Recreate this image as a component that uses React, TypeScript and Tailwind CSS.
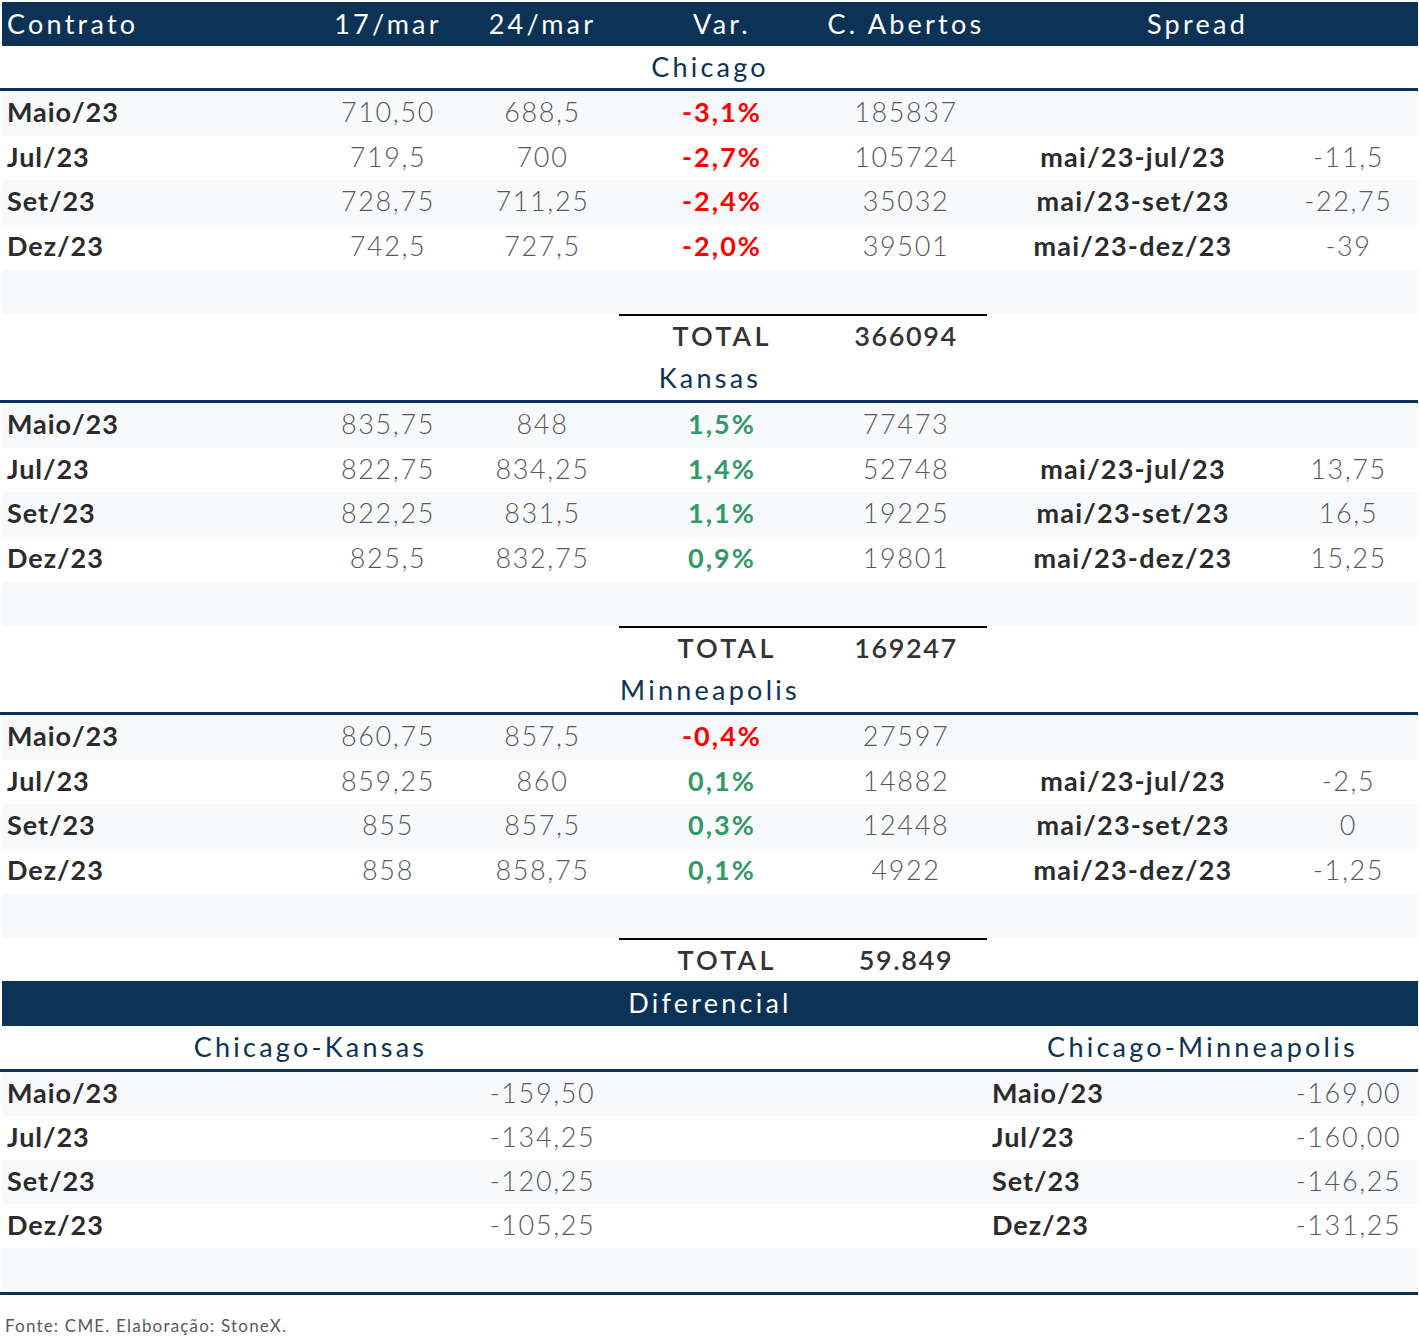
import React from "react";

type Sec = { title: string; rows: string[][]; total: string; totalShift: boolean };

const sections: Sec[] = [
  {
    title: "Chicago",
    rows: [
      ["Maio/23", "710,50", "688,5", "-3,1%", "185837", "", ""],
      ["Jul/23", "719,5", "700", "-2,7%", "105724", "mai/23-jul/23", "-11,5"],
      ["Set/23", "728,75", "711,25", "-2,4%", "35032", "mai/23-set/23", "-22,75"],
      ["Dez/23", "742,5", "727,5", "-2,0%", "39501", "mai/23-dez/23", "-39"],
    ],
    total: "366094",
    totalShift: false,
  },
  {
    title: "Kansas",
    rows: [
      ["Maio/23", "835,75", "848", "1,5%", "77473", "", ""],
      ["Jul/23", "822,75", "834,25", "1,4%", "52748", "mai/23-jul/23", "13,75"],
      ["Set/23", "822,25", "831,5", "1,1%", "19225", "mai/23-set/23", "16,5"],
      ["Dez/23", "825,5", "832,75", "0,9%", "19801", "mai/23-dez/23", "15,25"],
    ],
    total: "169247",
    totalShift: true,
  },
  {
    title: "Minneapolis",
    rows: [
      ["Maio/23", "860,75", "857,5", "-0,4%", "27597", "", ""],
      ["Jul/23", "859,25", "860", "0,1%", "14882", "mai/23-jul/23", "-2,5"],
      ["Set/23", "855", "857,5", "0,3%", "12448", "mai/23-set/23", "0"],
      ["Dez/23", "858", "858,75", "0,1%", "4922", "mai/23-dez/23", "-1,25"],
    ],
    total: "59.849",
    totalShift: true,
  },
];

const diff = [
  ["Maio/23", "-159,50", "-169,00"],
  ["Jul/23", "-134,25", "-160,00"],
  ["Set/23", "-120,25", "-146,25"],
  ["Dez/23", "-105,25", "-131,25"],
];

const GRID = "grid grid-cols-[308px_156px_153px_206px_162px_292px_139px] ml-[2px] w-[1416px]";
const LIGHT = "bg-[#f8f9fb]";
const REG = "tracking-[0.12em]";
const NUM = "text-center font-light tracking-[0.06em] text-[#595959]";
const LABEL = "font-bold tracking-[0.035em] text-[#2b2b2b]";
const SPREAD = "text-center font-bold tracking-[0.045em] text-[#2b2b2b]";

function NavyLine() {
  return <div className="h-[3px] w-[1418px] bg-[#0c3255]" />;
}

function Title({ text, h }: { text: string; h: string }) {
  return (
    <div className={`ml-[2px] flex ${h} w-[1416px] items-center justify-center pb-[2px] text-[#0c3255] ${REG}`}>
      {text}
    </div>
  );
}

function Section({ s, first }: { s: Sec; first: boolean }) {
  return (
    <>
      <Title text={s.title} h={first ? "h-[42px]" : "h-[43px]"} />
      <NavyLine />
      {s.rows.map((r, i) => {
        const neg = r[3].startsWith("-");
        return (
          <div key={i} className={`${GRID} h-[44.6px] items-center pb-[3px] ${i % 2 === 0 ? LIGHT : "bg-white"}`}>
            <div className={`pl-[5px] ${LABEL}`}>{r[0]}</div>
            <div className={NUM}>{r[1]}</div>
            <div className={NUM}>{r[2]}</div>
            <div className={`text-center font-bold tracking-[0.075em] ${neg ? "text-[#ff0000]" : "text-[#33996b]"}`}>{r[3]}</div>
            <div className={NUM}>{r[4]}</div>
            <div className={SPREAD}>{r[5]}</div>
            <div className={NUM}>{r[6]}</div>
          </div>
        );
      })}
      <div className={`${GRID} h-[44.6px] ${LIGHT}`} />
      <div className={`${GRID} h-[43px] bg-white`}>
        <div />
        <div />
        <div />
        <div className={`flex items-center justify-center border-t-2 border-black pb-[2px] font-semibold tracking-[0.12em] text-[#333333] ${s.totalShift ? "pl-[10px]" : ""}`}>
          TOTAL
        </div>
        <div className="flex items-center justify-center border-t-2 border-black pb-[2px] font-semibold tracking-[0.06em] text-[#333333]">
          {s.total}
        </div>
        <div />
        <div />
      </div>
    </>
  );
}

export default function App() {
  return (
    <div className="min-h-[1341px] w-[1419px] bg-white font-['Lato','Open_Sans',sans-serif] text-[27px] leading-none">
      <div className="pt-[2px]">
        <div className={`${GRID} h-[44px] items-center pb-[1px] bg-[#0c3255] text-white ${REG}`}>
          <div className="pl-[5px]">Contrato</div>
          <div className="text-center">17/mar</div>
          <div className="text-center">24/mar</div>
          <div className="text-center">Var.</div>
          <div className="text-center">C. Abertos</div>
          <div className="col-span-2 pr-[10px] text-center">Spread</div>
        </div>
        {sections.map((s, i) => (
          <Section key={s.title} s={s} first={i === 0} />
        ))}
        <div className={`ml-[2px] flex h-[45px] w-[1416px] items-center justify-center pb-[2px] bg-[#0c3255] text-white ${REG}`}>
          Diferencial
        </div>
        <div className={`${GRID} h-[43px] items-center pb-[2px] text-[#0c3255] ${REG}`}>
          <div className="col-span-3 text-center">Chicago-Kansas</div>
          <div />
          <div />
          <div className="col-span-2 text-center">Chicago-Minneapolis</div>
        </div>
        <NavyLine />
        {diff.map((r, i) => (
          <div key={i} className={`${GRID} h-[44px] items-center pb-[3px] ${i % 2 === 0 ? LIGHT : "bg-white"}`}>
            <div className={`pl-[5px] ${LABEL}`}>{r[0]}</div>
            <div />
            <div className={NUM}>{r[1]}</div>
            <div />
            <div />
            <div className={`pl-[5px] ${LABEL}`}>{r[0]}</div>
            <div className={NUM}>{r[2]}</div>
          </div>
        ))}
        <div className={`${GRID} h-[44px] ${LIGHT}`} />
        <NavyLine />
        <div className="pl-[5px] pt-[21px] text-[17px] leading-[20px] tracking-[0.07em] text-[#595959]">
          Fonte: CME. Elaboração: StoneX.
        </div>
      </div>
    </div>
  );
}
